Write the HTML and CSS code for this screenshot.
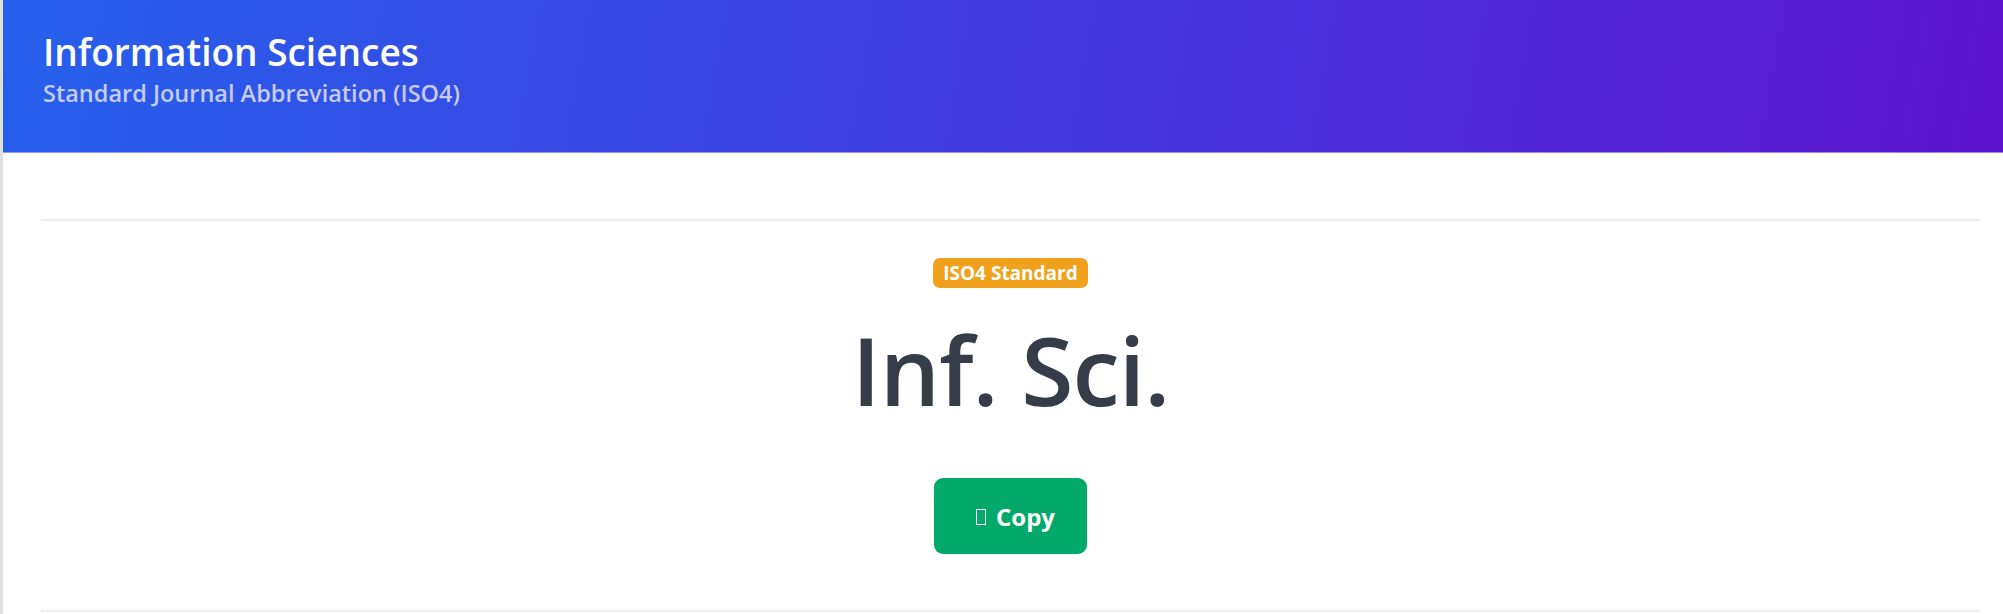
FILE: index.html
```html
<!DOCTYPE html>
<html lang="en">
<head>
<meta charset="utf-8">
<title>Information Sciences - ISO4</title>
<link rel="stylesheet" href="styles.css">
</head>
<body>
<div class="page">
  <header class="hero">
    <h1 class="hero-title">Information Sciences</h1>
    <p class="hero-sub">Standard Journal Abbreviation (ISO4)</p>
  </header>
  <main class="content">
    <div class="rule"></div>
    <section class="abbr">
      <span class="badge">ISO4 Standard</span>
      <div class="abbr-text">Inf. Sci.</div>
      <button class="copy-btn" type="button"><span class="tofu"></span><span>Copy</span></button>
    </section>
    <div class="rule"></div>
  </main>
</div>
</body>
</html>
```

FILE: styles.css
```css
html, body {
  margin: 0;
  padding: 0;
}
body {
  background: #e1e1e3;
  font-family: "Open Sans", "Noto Sans", sans-serif;
  overflow: hidden;
}
.page {
  margin-left: 3px;
  background: #ffffff;
  min-height: 614px;
}
.hero {
  background: linear-gradient(100deg, #2660ec 0%, #3a45e2 35%, #4a2fdb 65%, #5c16cd 100%);
  padding: 30px 40px 44px 40px;
  border-bottom: 1px solid rgba(190, 180, 255, 0.7);
  display: flex;
  flex-direction: column;
}
.hero-title {
  margin: 0;
  color: #ffffff;
  font-size: 37px;
  font-weight: 600;
  line-height: 1.2;
}
.hero-sub {
  margin: 5px 0 0 0;
  color: rgba(225, 225, 240, 0.85);
  font-size: 23.5px;
  font-weight: 600;
  line-height: 1.2;
}
.content {
  padding: 66px 23px 0 38px;
}
.rule {
  height: 2px;
  background: #eeeeee;
}
.abbr {
  display: flex;
  flex-direction: column;
  align-items: center;
  padding: 37px 0 56px 0;
}
.badge {
  background: #f1a11b;
  color: #ffffff;
  font-weight: 700;
  font-size: 19px;
  line-height: 1.2;
  padding: 4px 10px 4px 10px;
  border-radius: 7px;
}
.abbr-text {
  margin-top: 24px;
  color: #363d48;
  font-size: 95px;
  font-weight: 600;
  letter-spacing: -1px;
  line-height: 1.2;
}
.copy-btn {
  margin-top: 52px;
  width: 153px;
  height: 76px;
  background: #03a96a;
  color: #ffffff;
  border: none;
  border-radius: 9px;
  font-family: "Open Sans", "Noto Sans", sans-serif;
  font-weight: 700;
  font-size: 24px;
  display: flex;
  align-items: center;
  justify-content: center;
  gap: 10px;
  padding: 0 0 0 10px;
}
.tofu {
  display: inline-block;
  width: 8px;
  height: 14px;
  border: 1.5px solid #ffffff;
  margin-top: 2px;
}
```
